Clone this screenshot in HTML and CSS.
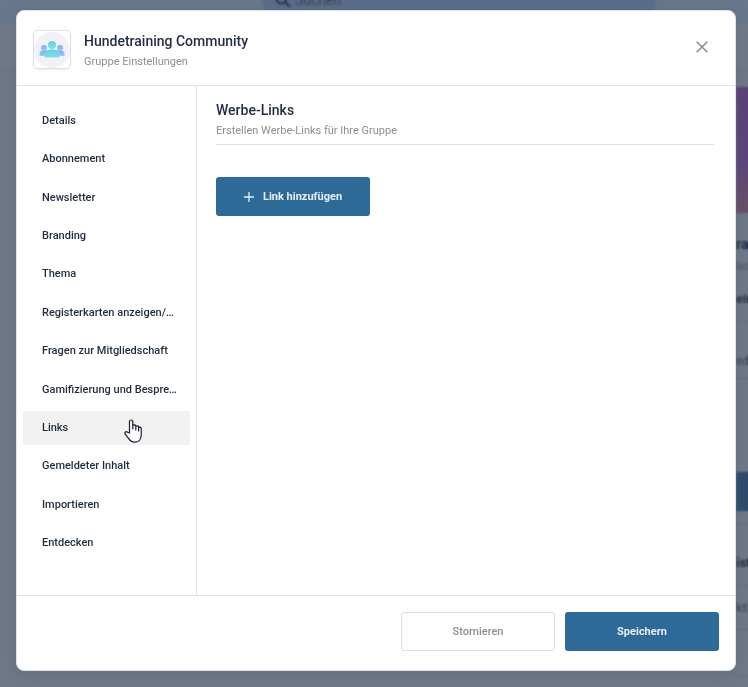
FILE: index.html
```html
<!DOCTYPE html>
<html lang="de">
<head>
  <meta charset="UTF-8">
  <meta name="viewport" content="width=device-width, initial-scale=1.0">
  <title>Hundetraining Community</title>
  <link rel="stylesheet" href="styles.css">
</head>
<body>
  <div class="page" aria-hidden="true">
    <div class="topbar">
      <div class="search">
        <svg class="search-icon" viewBox="0 0 16 16" width="16" height="16"><circle cx="6.5" cy="6.5" r="5"/><path d="M10.5 10.5 15 15"/></svg>
        <span>Suchen</span>
      </div>
    </div>
    <div class="subnav"></div>
    <div class="side-card">
      <div class="side-banner"></div>
      <div class="side-row side-name">ra</div>
      <div class="side-row side-muted">lich</div>
      <div class="side-row side-member">ein</div>
      <div class="side-row side-text">ed</div>
      <div class="side-row side-space"></div>
      <div class="side-button"></div>
      <div class="side-row side-gap"></div>
      <div class="side-row side-heading">ist</div>
      <div class="side-row side-activity">kti</div>
      <div class="side-row side-end"></div>
    </div>
  </div>

  <div class="overlay">
    <div class="modal" role="dialog" aria-labelledby="modal-title">
      <header class="modal-header">
        <div class="avatar">
          <svg viewBox="0 0 36 36" width="36" height="36">
            <defs>
              <linearGradient id="front" x1="0" y1="0" x2="0" y2="1">
                <stop offset="0" stop-color="#66cdea"/>
                <stop offset="1" stop-color="#7de3e0"/>
              </linearGradient>
              <linearGradient id="back" x1="0" y1="0" x2="0" y2="1">
                <stop offset="0" stop-color="#84aef0"/>
                <stop offset="1" stop-color="#a5c6fa"/>
              </linearGradient>
            </defs>
            <circle cx="18" cy="18" r="18" fill="#f1f2f7"/>
            <g fill="url(#back)">
              <circle cx="10" cy="16" r="3"/>
              <path d="M5.500 24v-1.500a4 4 0 0 1 4-4h4V24z"/>
              <circle cx="26" cy="16" r="3"/>
              <path d="M30.500 24v-1.500a4 4 0 0 0-4-4h-4V24z"/>
            </g>
            <g fill="url(#front)">
              <circle cx="18" cy="13" r="4"/>
              <path d="M10.500 25.500V23a5.500 5.500 0 0 1 5.500-5.500h4a5.500 5.500 0 0 1 5.500 5.500v2.500z"/>
            </g>
          </svg>
        </div>
        <div class="modal-heading">
          <h1 id="modal-title">Hundetraining Community</h1>
          <p>Gruppe Einstellungen</p>
        </div>
        <button class="close" type="button" aria-label="Schließen">
          <svg viewBox="0 0 12 12" width="12" height="12"><path d="M.7.7l10.600 10.600M11.300.7L.7 11.300"/></svg>
        </button>
      </header>

      <div class="modal-body">
        <nav class="sidebar">
          <a href="#"><span>Details</span></a>
          <a href="#"><span>Abonnement</span></a>
          <a href="#"><span>Newsletter</span></a>
          <a href="#"><span>Branding</span></a>
          <a href="#"><span>Thema</span></a>
          <a href="#"><span>Registerkarten anzeigen/ausblenden</span></a>
          <a href="#"><span>Fragen zur Mitgliedschaft</span></a>
          <a href="#"><span>Gamifizierung und Besprechungen</span></a>
          <a href="#" class="active"><span>Links</span>
            <svg class="pointer" viewBox="0 0 18 24" width="18" height="24"><path d="M5.500 14V2.300a1.700 1.700 0 0 1 3.300 0V10 7.200a1.500 1.500 0 0 1 3 .3V11 8a1.400 1.400 0 0 1 2.800.4V12 9.200a1.300 1.300 0 0 1 2.600.3V16c0 4.500-2.700 7.200-6.500 7.200-3.200 0-4.900-1.600-6.100-3.800L1.200 15.200c-1-2 .9-3.300 2.300-1.900z"/></svg>
          </a>
          <a href="#"><span>Gemeldeter Inhalt</span></a>
          <a href="#"><span>Importieren</span></a>
          <a href="#"><span>Entdecken</span></a>
        </nav>

        <main class="content">
          <div class="content-heading">
            <h2>Werbe-Links</h2>
            <p>Erstellen Werbe-Links für Ihre Gruppe</p>
          </div>
          <button class="btn btn-primary" type="button">
            <svg viewBox="0 0 10 10" width="10" height="10"><path d="M5 0v10M0 5h10"/></svg>
            Link hinzufügen
          </button>
        </main>
      </div>

      <footer class="modal-footer">
        <button class="btn btn-outline" type="button">Stornieren</button>
        <button class="btn btn-primary" type="button">Speichern</button>
      </footer>
    </div>
  </div>
</body>
</html>
```

FILE: styles.css
```css
* {
  box-sizing: border-box;
}

body {
  margin: 0;
  background-color: #6f7987;
  color: #1f2c3f;
  font-family: Roboto, "Liberation Sans", sans-serif;
  font-size: 11px;
  line-height: 16px;
}

h1,
h2,
p {
  margin: 0;
}

/* Page behind the dialog */
.page {
  height: 100vh;
  overflow: hidden;
  color: #1c2838;
}

.topbar {
  height: 23px;
  padding: 0 92px 0 262px;
  background-color: #69778b;
}

.search {
  display: flex;
  align-items: center;
  gap: 4px;
  height: 20px;
  padding: 0 13px 20px;
  border-radius: 0 0 20px 20px;
  background-color: #5a6e89;
  color: #364459;
  font-size: 14px;
}

.search-icon {
  fill: none;
  stroke: #20304a;
  stroke-width: 2;
}

.subnav {
  height: 48px;
  border-bottom: 1px solid #667080;
  background-color: #717a88;
}

.side-card {
  width: 12px;
  margin: 16px 0 0 auto;
  overflow: hidden;
  white-space: nowrap;
  background-color: #707a88;
}

.side-banner {
  height: 126px;
  background: linear-gradient(#5b4079, #60447a 60%, #6c5068);
}

.side-row {
  display: flex;
  align-items: center;
}

.side-name {
  height: 44px;
  padding-top: 18px;
  font-size: 14px;
  font-weight: 700;
}

.side-muted {
  height: 20px;
  color: #3f4a59;
}

.side-member {
  height: 45px;
  font-size: 13px;
  font-weight: 500;
  border-bottom: 1px solid #616b7a;
}

.side-text {
  height: 57px;
  padding-top: 22px;
  color: #374150;
  font-size: 12px;
  border-bottom: 1px solid #616b7a;
}

.side-space {
  height: 93px;
  border-bottom: 1px solid #616b7a;
}

.side-button {
  height: 39px;
  background-color: #2d4b6b;
}

.side-gap {
  height: 13px;
  border-bottom: 1px solid #616b7a;
}

.side-heading {
  height: 62px;
  padding-top: 16px;
  font-size: 13px;
  font-weight: 700;
  border-bottom: 1px solid #616b7a;
}

.side-activity {
  height: 44px;
  color: #374150;
  font-size: 13px;
  border-bottom: 1px solid #616b7a;
}

.side-end {
  height: 46px;
  border-bottom: 1px solid #616b7a;
}

/* Dialog */
.overlay {
  position: fixed;
  inset: 0;
  display: flex;
  padding: 10px 12px 16px 16px;
  backdrop-filter: blur(1px);
}

.modal {
  display: flex;
  flex: 1;
  flex-direction: column;
  min-width: 0;
  border: 1px solid #dfe1e4;
  border-radius: 8px;
  background-color: #fff;
  box-shadow: 0 4px 16px rgba(80, 94, 116, 0.4);
}

.modal-header {
  display: flex;
  align-items: center;
  gap: 13px;
  height: 75px;
  padding: 3px 27px 0 16px;
  border-bottom: 1px solid #e2e2e2;
}

.avatar {
  display: flex;
  align-items: center;
  justify-content: center;
  width: 38px;
  height: 39px;
  border: 1px solid #e0e0e0;
  border-radius: 5px;
  box-shadow: 0 1px 2px rgba(0, 0, 0, 0.08);
}

.modal-heading {
  flex: 1;
  padding-top: 4px;
}

.modal-heading h1,
.content-heading h2 {
  font-size: 14px;
  font-weight: 500;
  line-height: 20px;
}

.modal-heading p,
.content-heading p {
  color: #8e8e8e;
  line-height: 22px;
}

.close {
  display: flex;
  padding: 0 0 6px;
  border: 0;
  background: none;
  cursor: pointer;
}

.close svg {
  fill: none;
  stroke: #858585;
  stroke-width: 1.4;
}

.modal-body {
  display: flex;
  flex: 1;
  min-height: 0;
}

.sidebar {
  display: flex;
  flex-direction: column;
  justify-content: space-between;
  width: 180px;
  padding: 18px 6px 35px;
  border-right: 1px solid #e2e2e2;
}

.sidebar a {
  position: relative;
  padding: 9px 12px 9px 19px;
  border-radius: 2px;
  color: inherit;
  font-weight: 500;
  text-decoration: none;
}

.sidebar span {
  display: block;
  overflow: hidden;
  text-overflow: ellipsis;
  white-space: nowrap;
}

.sidebar .active {
  background-color: #f1f1f1;
}

.pointer {
  position: absolute;
  top: 8px;
  left: 101px;
  fill: #fff;
  stroke: #171c2c;
  stroke-width: 1.2;
  stroke-linejoin: round;
}

.content {
  flex: 1;
  padding: 14px 20px 0 19px;
}

.content-heading {
  margin-bottom: 32px;
  padding-bottom: 2px;
  border-bottom: 1px solid #e2e2e2;
}

.modal-footer {
  display: flex;
  justify-content: flex-end;
  gap: 10px;
  padding: 16px 16px 19px;
  border-top: 1px solid #e2e2e2;
}

.btn {
  display: flex;
  align-items: center;
  justify-content: center;
  gap: 9px;
  width: 154px;
  height: 39px;
  border: 0;
  border-radius: 3px;
  font: inherit;
  cursor: pointer;
}

.btn svg {
  fill: none;
  stroke: #e6edf3;
  stroke-width: 1.3;
}

.btn-primary {
  background-color: #2e6a97;
  color: #e6edf3;
  font-weight: 700;
}

.btn-outline {
  border: 1px solid #dedede;
  background-color: #fff;
  color: #8e8e8e;
  font-weight: 500;
}
```
